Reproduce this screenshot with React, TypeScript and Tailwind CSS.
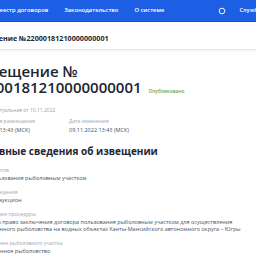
export default function App() {
  return (
    <div className="w-[256px] h-[256px] overflow-hidden bg-white font-['Open_Sans',sans-serif]">
      {/* Top navigation */}
      <header className="h-[22px] bg-[#1d5fe4] border-b border-[#1a52c4] flex items-center text-white text-[5.8px] font-semibold whitespace-nowrap">
        <nav className="flex items-center ml-[-4px] gap-[16px]">
          <span>Реестр договоров</span>
          <span>Законодательство</span>
          <span>О системе</span>
        </nav>
        <svg className="ml-[54px] w-[8px] h-[8px] shrink-0" viewBox="0 0 10 10" fill="none" stroke="white" strokeWidth="1.2">
          <circle cx="5" cy="5" r="3.5" />
        </svg>
        <span className="ml-[13px]">Служба поддержки</span>
      </header>

      {/* Breadcrumb title */}
      <div className="h-[28px] pt-[5px] flex items-center border-b border-[#e3e6eb] shadow-[0_1px_3px_rgba(0,0,0,0.06)] whitespace-nowrap">
        <span className="ml-[-27px] text-[7.2px] font-bold text-[#1e2633]">Извещение №22000181210000000001</span>
      </div>

      {/* Main content */}
      <main className="ml-[-30px] pt-[13px] whitespace-nowrap">
        <h1 className="text-[15px] leading-[16px] font-semibold text-[#1b2431]">
          Извещение №
          <br />
          22000181210000000001
          <span className="ml-[7px] text-[4.8px] font-semibold text-[#5aa85a] align-baseline">Опубликовано</span>
        </h1>
        <p className="mt-[8px] text-[5px] leading-[6px] text-[#9aa1ab]">Редакция актуальная от 10.11.2022</p>

        <div className="mt-[5px] grid grid-cols-[99px_1fr]">
          <div>
            <div className="text-[5px] leading-[6px] text-[#a0a7b1]">Дата и время размещения</div>
            <div className="mt-[3px] text-[5.5px] leading-[7px] text-[#4a5160]">09.11.2022 13:43 (МСК)</div>
          </div>
          <div>
            <div className="text-[5px] leading-[6px] text-[#a0a7b1]">Дата изменения</div>
            <div className="mt-[3px] text-[5.5px] leading-[7px] text-[#4a5160]">09.11.2022 13:43 (МСК)</div>
          </div>
        </div>

        <h2 className="mt-[11px] ml-[3px] text-[10px] leading-[13px] font-bold text-[#1e2633]">Основные сведения об извещении</h2>

        <div className="mt-[9px] flex flex-col gap-[7.5px]">
          <div>
            <div className="text-[5px] leading-[6px] text-[#a0a7b1]">Предмет торгов</div>
            <div className="mt-[1.5px] text-[5.5px] leading-[7px] text-[#4a5160]">Право пользования рыболовным участком</div>
          </div>
          <div>
            <div className="text-[5px] leading-[6px] text-[#a0a7b1]">Форма проведения</div>
            <div className="mt-[1.5px] text-[5.5px] leading-[7px] text-[#4a5160]">Открытый аукцион</div>
          </div>
          <div>
            <div className="text-[5px] leading-[6px] text-[#a0a7b1]">Наименование процедуры</div>
            <div className="mt-[1.5px] text-[5.5px] leading-[7px] text-[#4a5160]">
              Аукцион на право заключения договора пользования рыболовным участком для осуществления
              <br />
              промышленного рыболовства на водных объектах Ханты-Мансийского автономного округа – Югры
            </div>
          </div>
          <div>
            <div className="text-[5px] leading-[6px] text-[#a0a7b1]">Использование рыболовного участка</div>
            <div className="mt-[1.5px] text-[5.5px] leading-[7px] text-[#4a5160]">Промышленное рыболовство</div>
          </div>
        </div>
      </main>
    </div>
  )
}
